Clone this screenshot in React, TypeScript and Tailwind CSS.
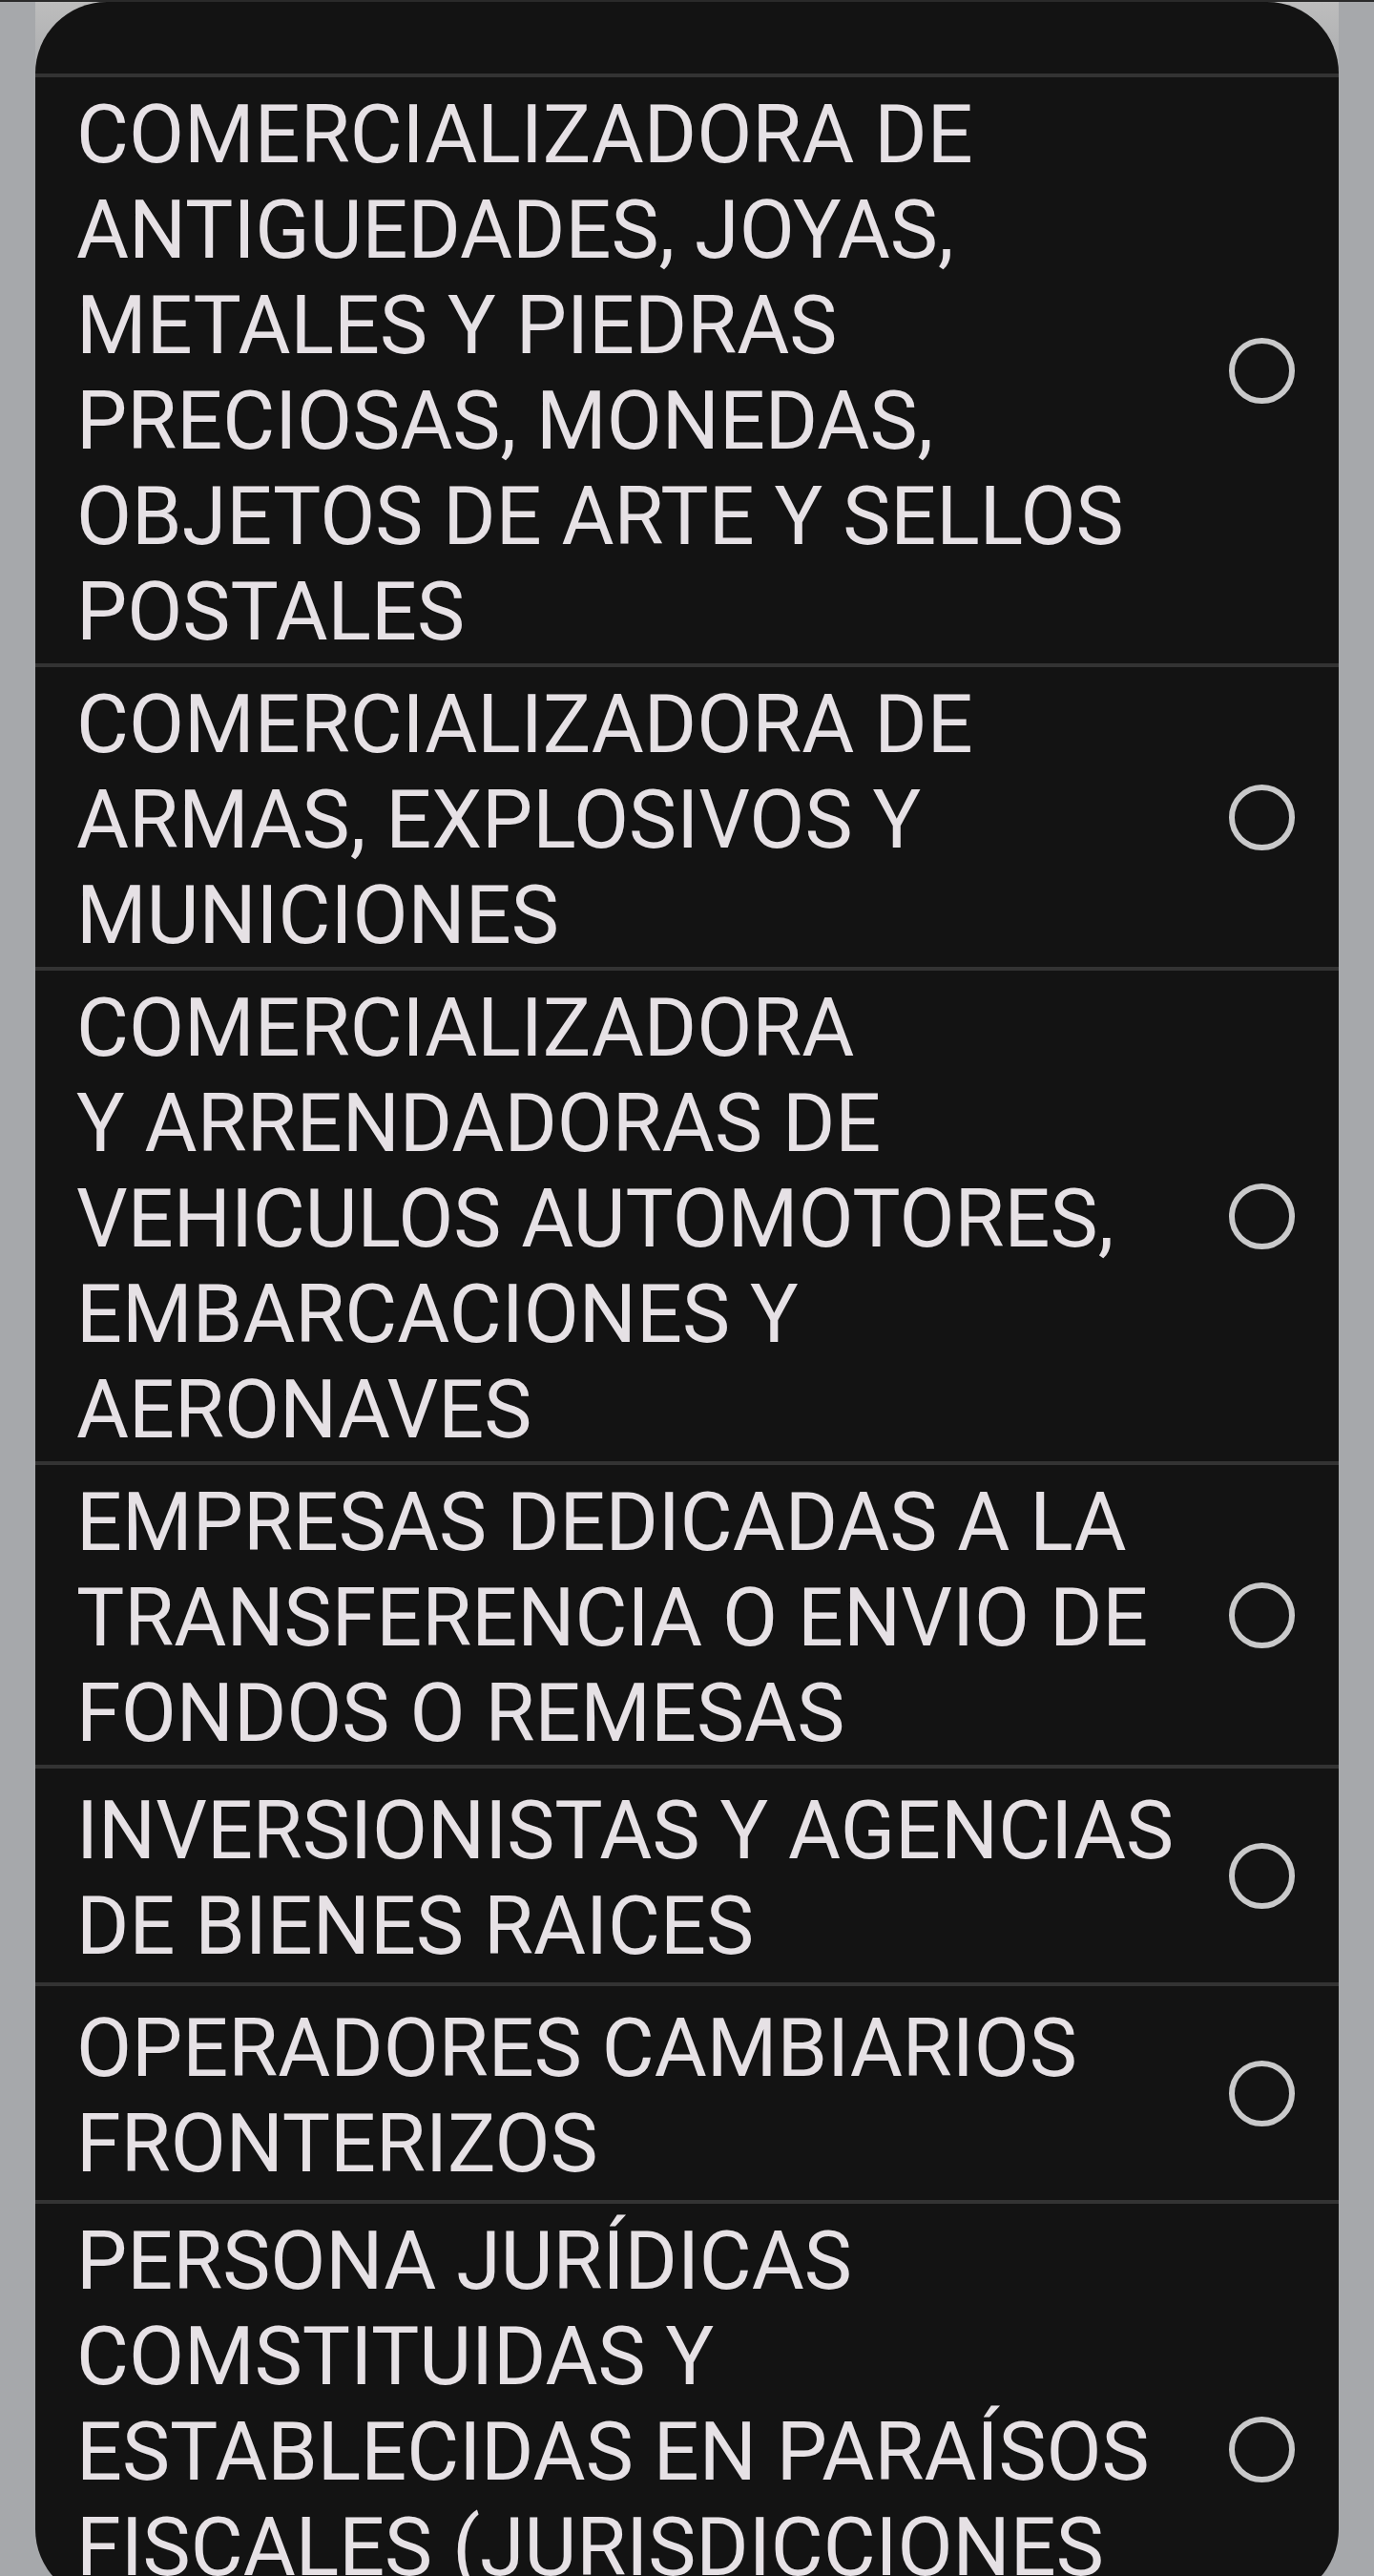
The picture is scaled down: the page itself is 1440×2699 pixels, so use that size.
import { Fragment } from "react";

// each entry keeps the line breaks seen in the dialog
const OPTIONS: string[][] = [
  [
    "COMERCIALIZADORA DE",
    "ANTIGUEDADES, JOYAS,",
    "METALES Y PIEDRAS",
    "PRECIOSAS, MONEDAS,",
    "OBJETOS DE ARTE Y SELLOS",
    "POSTALES",
  ],
  ["COMERCIALIZADORA DE", "ARMAS, EXPLOSIVOS Y", "MUNICIONES"],
  [
    "COMERCIALIZADORA",
    "Y ARRENDADORAS DE",
    "VEHICULOS AUTOMOTORES,",
    "EMBARCACIONES Y",
    "AERONAVES",
  ],
  ["EMPRESAS DEDICADAS A LA", "TRANSFERENCIA O ENVIO DE", "FONDOS O REMESAS"],
  ["INVERSIONISTAS Y AGENCIAS", "DE BIENES RAICES"],
  ["OPERADORES CAMBIARIOS", "FRONTERIZOS"],
  [
    "PERSONA JURÍDICAS",
    "COMSTITUIDAS Y",
    "ESTABLECIDAS EN PARAÍSOS",
    "FISCALES (JURISDICCIONES",
    "DE BAJA O NULA IMPOSICIÓN)",
  ],
];

function Radio() {
  return (
    <span className="block h-[69px] w-[69px] shrink-0 rounded-full border-[6px] border-[#c9c9ca]" />
  );
}

function OptionRow({ lines }: { lines: string[] }) {
  return (
    <label className="flex min-h-[228px] cursor-pointer items-center border-t-4 border-[#333333] pl-[43px] pr-[46px]">
      <span className="flex-1 pt-[11px] pb-[3px] text-[84.4px] leading-[100px] text-[#e6e1e5]">
        {lines.map((l, i) => (
          <Fragment key={i}>
            {i > 0 && <br />}
            {l}
          </Fragment>
        ))}
      </span>
      <Radio />
    </label>
  );
}

export default function App() {
  return (
    <div
      className="relative h-[2699px] overflow-hidden border-t-2 border-[#2a2a2a] bg-[#a6a8ab]"
      style={{ fontFamily: "Roboto, 'Noto Sans', sans-serif" }}
    >
      <div className="absolute left-[37px] right-[37px] top-0 h-[95px] bg-gradient-to-b from-[#bdbdbd] to-[#a6a8ab]" />
      <div className="relative mx-[37px] h-[2723px] overflow-hidden rounded-[75px] bg-[#131313]">
        <div className="h-[75px]" />
        {OPTIONS.map((lines, i) => (
          <OptionRow key={i} lines={lines} />
        ))}
      </div>
    </div>
  );
}
